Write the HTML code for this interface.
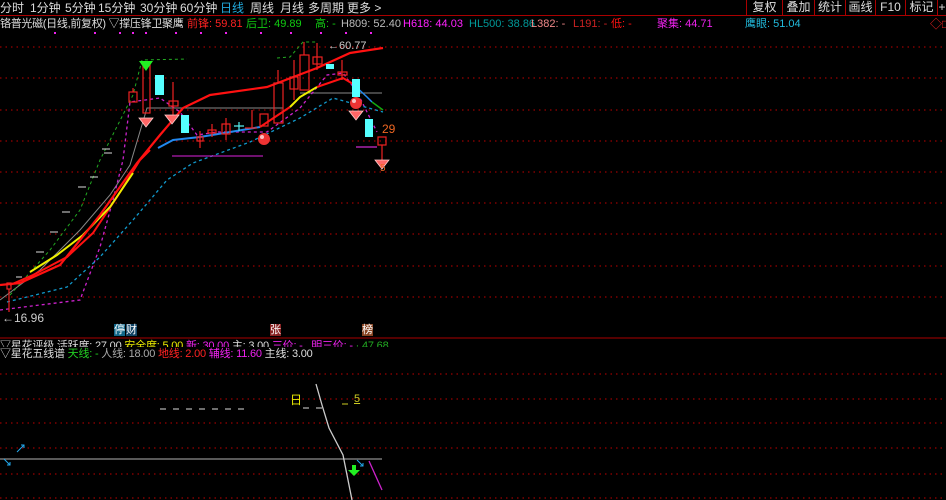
<!DOCTYPE html>
<html><head><meta charset="utf-8"><style>
*{margin:0;padding:0;box-sizing:border-box}
body{width:946px;height:500px;background:#000;overflow:hidden;position:relative;font-family:"Liberation Sans","Noto Sans CJK SC",sans-serif;font-size:12px;color:#ddd}
.t{position:absolute;white-space:nowrap;line-height:14px}
.s{font-size:11px}
.bar{position:absolute;left:0;top:0;width:946px;height:16px;border-bottom:1px solid #a00}
.btn{position:absolute;top:0;height:16px;border-left:1px solid #a00;color:#ddd;line-height:15px;text-align:center}
svg{position:absolute;left:0;top:0}
</style></head><body>
<div class="bar"></div>
<div class="t" style="left:0;top:1px">分时</div>
<div class="t" style="left:30px;top:1px">1分钟</div>
<div class="t" style="left:65px;top:1px">5分钟</div>
<div class="t" style="left:98px;top:1px">15分钟</div>
<div class="t" style="left:140px;top:1px">30分钟</div>
<div class="t" style="left:180px;top:1px">60分钟</div>
<div class="t" style="left:220px;top:1px;color:#2ad">日线</div>
<div class="t" style="left:250px;top:1px">周线</div>
<div class="t" style="left:280px;top:1px">月线</div>
<div class="t" style="left:308px;top:1px">多周期</div>
<div class="t" style="left:347px;top:1px">更多 &gt;</div>
<div class="btn" style="left:746px;width:36px">复权</div>
<div class="btn" style="left:782px;width:32px">叠加</div>
<div class="btn" style="left:814px;width:31px">统计</div>
<div class="btn" style="left:845px;width:30px">画线</div>
<div class="btn" style="left:875px;width:30px">F10</div>
<div class="btn" style="left:905px;width:32px">标记</div>
<div class="btn" style="left:937px;width:9px">+</div>
<div class="t s" style="left:0;top:17px;letter-spacing:-0.3px">铬普光磁(日线,前复权) ▽撑压锋卫聚鹰</div>
<div class="t s" style="left:187px;top:17px;color:#f22">前锋: 59.81</div>
<div class="t s" style="left:246px;top:17px;color:#1c1">后卫: 49.89</div>
<div class="t s" style="left:315px;top:17px;color:#1c1">高: -</div>
<div class="t s" style="left:341px;top:17px;color:#bbb">H809: 52.40</div>
<div class="t s" style="left:403px;top:17px;color:#f2f">H618: 44.03</div>
<div class="t s" style="left:469px;top:17px;color:#099">HL500: 38.86</div>
<div class="t s" style="left:531px;top:17px;color:#e88">L382: -</div>
<div class="t s" style="left:573px;top:17px;color:#c22">L191: -</div>
<div class="t s" style="left:611px;top:17px;color:#f11">低: -</div>
<div class="t s" style="left:657px;top:17px;color:#e2e">聚集: 44.71</div>
<div class="t s" style="left:745px;top:17px;color:#2bd">鹰眼: 51.04</div>
<div class="t" style="left:930px;top:17px;color:#e22">◇□</div>
<svg width="946" height="500">
<g stroke="#900" stroke-dasharray="1.5 4" stroke-width="1.2">
<line x1="0" y1="47" x2="946" y2="47"/><line x1="0" y1="78" x2="946" y2="78"/><line x1="0" y1="110" x2="946" y2="110"/><line x1="0" y1="141" x2="946" y2="141"/><line x1="0" y1="172" x2="946" y2="172"/><line x1="0" y1="203" x2="946" y2="203"/><line x1="0" y1="234" x2="946" y2="234"/><line x1="0" y1="266" x2="946" y2="266"/><line x1="0" y1="297" x2="946" y2="297"/>
<line x1="0" y1="374" x2="946" y2="374"/><line x1="0" y1="399" x2="946" y2="399"/><line x1="0" y1="423" x2="946" y2="423"/><line x1="0" y1="448" x2="946" y2="448"/><line x1="0" y1="474" x2="946" y2="474"/><line x1="0" y1="498" x2="946" y2="498"/>
</g>
<line x1="0" y1="338" x2="946" y2="338" stroke="#a00"/>
<g fill="#e2e"><rect x="54" y="32" width="2" height="2"/><rect x="94" y="32" width="2" height="2"/><rect x="119" y="32" width="2" height="2"/><rect x="132" y="32" width="2" height="2"/><rect x="145" y="32" width="2" height="2"/><rect x="175" y="32" width="2" height="2"/><rect x="200" y="32" width="2" height="2"/><rect x="225" y="32" width="2" height="2"/><rect x="260" y="32" width="2" height="2"/><rect x="290" y="32" width="2" height="2"/><rect x="320" y="32" width="2" height="2"/><rect x="345" y="32" width="2" height="2"/><rect x="370" y="32" width="2" height="2"/></g>
<polyline fill="none" stroke="#888" stroke-width="1" points="0,300 40,270 80,230 110,195 130,165 147,108 283,108"/>
<polyline fill="none" stroke="#888" points="300,93 382,93"/>
<polyline fill="none" stroke="#2a2" stroke-dasharray="3 3" points="10,295 50,250 80,210 100,160 133,95 142,60 187,59"/>
<polyline fill="none" stroke="#2a2" stroke-dasharray="3 3" points="277,58 290,57 303,42 317,42"/>
<polyline fill="none" stroke="#c2c" stroke-width="1.3" stroke-dasharray="3 3" points="0,310 80,300 100,247 113,200 123,160 130,102 160,98 180,112 197,135 217,132 267,132 300,108 327,75 343,73 357,92 377,132"/>
<polyline fill="none" stroke="#19c" stroke-width="1.3" stroke-dasharray="3 3" points="7,302 67,287 100,257 133,220 167,180 193,163 250,142 300,118 333,98 383,112"/>
<polyline fill="none" stroke="#f11" stroke-width="2" points="10,285 33,275 67,257 93,233 117,197 140,160 150,150"/>
<polyline fill="none" stroke="#ee0" stroke-width="2" points="30,272 57,255 83,235 110,207 133,173"/>
<polyline fill="none" stroke="#f11" stroke-width="2.2" points="0,285 20,283 60,265 100,215 137,163 160,135 183,108 210,95 267,87 317,68 350,53 383,48"/>
<polyline fill="none" stroke="#28e" stroke-width="2" points="158,148 173,140 200,137 260,127"/>
<polyline fill="none" stroke="#f11" stroke-width="2" points="260,127 290,107"/>
<polyline fill="none" stroke="#ee0" stroke-width="2" points="290,107 300,97 317,87"/>
<polyline fill="none" stroke="#f11" stroke-width="2" points="317,87 343,78 353,84"/>
<polyline fill="none" stroke="#28e" stroke-width="1.5" points="353,84 367,97 372,102"/>
<polyline fill="none" stroke="#1a1" stroke-width="1.5" points="372,102 383,110"/>
<g fill="none" stroke="#e22" stroke-width="1.2">
<rect x="129" y="92" width="8" height="10"/><line x1="133" y1="88" x2="133" y2="92"/>
<rect x="143" y="63" width="7" height="50"/>
<rect x="169" y="101" width="9" height="5"/><line x1="173" y1="82" x2="173" y2="116"/>
<rect x="197" y="137" width="6" height="4"/><line x1="200" y1="131" x2="200" y2="148"/>
<rect x="208" y="130" width="8" height="3"/><line x1="212" y1="124" x2="212" y2="137"/>
<rect x="222" y="124" width="8" height="10"/><line x1="226" y1="118" x2="226" y2="140"/>
<line x1="245" y1="128" x2="257" y2="128"/><line x1="252" y1="110" x2="252" y2="128"/>
<rect x="260" y="114" width="8" height="12"/>
<rect x="274" y="83" width="9" height="40"/><line x1="278" y1="70" x2="278" y2="83"/>
<rect x="290" y="77" width="8" height="12"/><line x1="294" y1="60" x2="294" y2="100"/>
<rect x="300" y="55" width="9" height="35"/><line x1="304" y1="42" x2="304" y2="55"/>
<rect x="313" y="57" width="9" height="7"/><line x1="317" y1="43" x2="317" y2="70"/>
<rect x="338" y="72" width="9" height="3"/><line x1="342" y1="60" x2="342" y2="80"/>
<rect x="378" y="137" width="8" height="8"/><line x1="382" y1="145" x2="382" y2="160"/>
<rect x="7" y="283" width="4" height="6"/><line x1="9" y1="289" x2="9" y2="312"/>
</g>
<g fill="#5ff">
<rect x="155" y="75" width="9" height="20"/><rect x="181" y="115" width="8" height="18"/><rect x="326" y="64" width="8" height="5"/><rect x="352" y="79" width="8" height="18"/><rect x="365" y="119" width="8" height="18"/>
</g>
<path d="M234 126h10M239 122v9" stroke="#5ee" stroke-width="1.2"/>
<line x1="172" y1="156" x2="263" y2="156" stroke="#d2d"/>
<line x1="356" y1="147" x2="377" y2="147" stroke="#a2a" stroke-width="1.5"/>
<polygon points="139,61 153,61 146,71" fill="#2e2"/>
<g fill="#f66" stroke="#fcc" stroke-width="0.8">
<polygon points="139,118 153,118 146,127"/><polygon points="165,115 179,115 172,124"/><polygon points="349,111 363,111 356,120"/><polygon points="375,160 389,160 382,169"/>
</g>
<g fill="#e33"><circle cx="264" cy="139" r="6"/><circle cx="356" cy="103" r="6"/></g>
<g fill="#fff" opacity=".7"><circle cx="262" cy="137" r="2"/><circle cx="354" cy="101" r="2"/></g>
<g stroke="#ddd"><line x1="36" y1="252" x2="44" y2="252"/><line x1="50" y1="232" x2="58" y2="232"/><line x1="62" y1="212" x2="70" y2="212"/><line x1="78" y1="187" x2="86" y2="187"/><line x1="90" y1="177" x2="98" y2="177"/><line x1="104" y1="153" x2="112" y2="153"/><line x1="16" y1="277" x2="22" y2="277"/><line x1="102" y1="149" x2="110" y2="149"/></g>
<line x1="0" y1="459" x2="382" y2="459" stroke="#777" stroke-width="1.5"/>
<polyline fill="none" stroke="#ccc" stroke-width="1.3" points="316,384 322,405 329,428 343,455 352,500"/>
<line x1="369" y1="461" x2="382" y2="490" stroke="#c2c" stroke-width="1.3"/>
<polygon points="352,465 356,465 356,470 360,470 354,476 348,470 352,470" fill="#2e2"/>
<path d="M357 460l6 6M360 466h3v-3" stroke="#2ae" fill="none"/>
<path d="M4 459l6 6M7 465h3v-3M17 452l7-7M21 445h3v3" stroke="#2ae" fill="none"/>
<g stroke="#ddd"><line x1="160" y1="409" x2="166" y2="409"/><line x1="173" y1="409" x2="179" y2="409"/><line x1="186" y1="409" x2="192" y2="409"/><line x1="199" y1="409" x2="205" y2="409"/><line x1="212" y1="409" x2="218" y2="409"/><line x1="225" y1="409" x2="231" y2="409"/><line x1="238" y1="409" x2="244" y2="409"/><line x1="303" y1="408" x2="309" y2="408"/><line x1="316" y1="408" x2="322" y2="408"/></g>
<line x1="342" y1="404" x2="348" y2="404" stroke="#cc2"/>
</svg>
<div class="t s" style="left:328px;top:39px;color:#ccc">←60.77</div>
<div class="t" style="left:382px;top:122px;color:#e62">29</div>
<div class="t" style="left:380px;top:162px;color:#e62;font-size:10px">5</div>
<div class="t" style="left:2px;top:311px;color:#ccc">←16.96</div>
<div class="t" style="left:114px;top:324px;color:#fff;background:#168;font-size:11px;line-height:12px">停</div>
<div class="t" style="left:126px;top:324px;color:#fff;background:#146;font-size:11px;line-height:12px">财</div>
<div class="t" style="left:270px;top:324px;color:#fff;background:#822;font-size:11px;line-height:12px">张</div>
<div class="t" style="left:362px;top:324px;color:#fff;background:#842;font-size:11px;line-height:12px">榜</div>
<div class="t s" style="left:0;top:339px;height:8px;overflow:hidden;line-height:14px;letter-spacing:-0.2px"><span style="display:inline-block;margin-top:-3px">▽星花评级 活跃度: 27.00 <span style="color:#ee0">安全度: 5.00</span> <span style="color:#e2e">新: 30.00</span> 主: 3.00 <span style="color:#e2e">三价: -</span>&nbsp;&nbsp; <span style="color:#e2e">明三价: -</span> <span style="color:#2a2">· 47.68</span></span></div>
<div class="t s" style="left:0;top:347px;letter-spacing:-0.2px">▽星花五线谱 <span style="color:#2c2">天线: -</span> <span style="color:#aaa">人线: 18.00</span> <span style="color:#f22">地线: 2.00</span> <span style="color:#e2e">辅线: 11.60</span> <span style="color:#ddd">主线: 3.00</span></div>
<div class="t" style="left:290px;top:393px;color:#ee0">日</div>
<div class="t" style="left:354px;top:392px;color:#cc2;font-size:11px;text-decoration:underline">5</div>
</body></html>
